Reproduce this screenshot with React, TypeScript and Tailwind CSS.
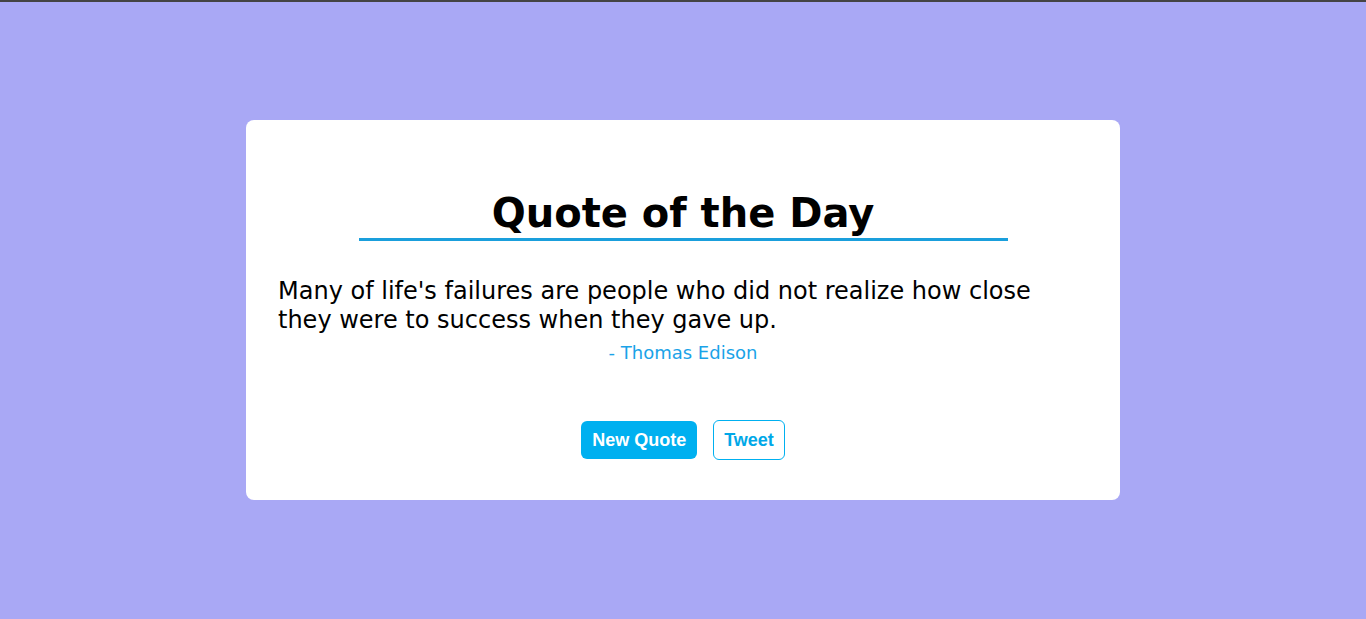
import React from 'react';

const QUOTE = {
  text: "Many of life's failures are people who did not realize how close they were to success when they gave up.",
  author: 'Thomas Edison',
};

export default function App() {
  return (
    <div className="min-h-screen bg-[#a9a8f5] border-t-2 border-[#444] flex justify-center items-start pt-[118px] font-['DejaVu_Sans',Verdana,sans-serif]">
      <div className="w-[874px] h-[380px] bg-white rounded-lg px-8 pt-[70px]">
        {/* Title with underline */}
        <h1 className="w-[649px] mx-auto pb-[2px] text-center text-[40px] leading-[46px] font-bold text-black border-b-[3px] border-[#1a9fdc]">
          Quote of the Day
        </h1>

        {/* Quote body */}
        <p className="mt-9 text-[24px] leading-[29px] text-black">{QUOTE.text}</p>
        <p className="mt-[7px] text-center text-[18px] leading-[21px] text-[#1aa3e8]">- {QUOTE.author}</p>

        {/* Actions */}
        <div className="mt-[57px] flex justify-center items-center gap-4 font-['Liberation_Sans',Arial,sans-serif] font-bold text-[18px]">
          <button className="h-[38px] px-[11px] rounded-md bg-[#00b0f0] text-white">New Quote</button>
          <button className="h-[40px] px-[10px] rounded-md border border-[#00b0f0] bg-white text-[#00a8e8]">Tweet</button>
        </div>
      </div>
    </div>
  );
}
